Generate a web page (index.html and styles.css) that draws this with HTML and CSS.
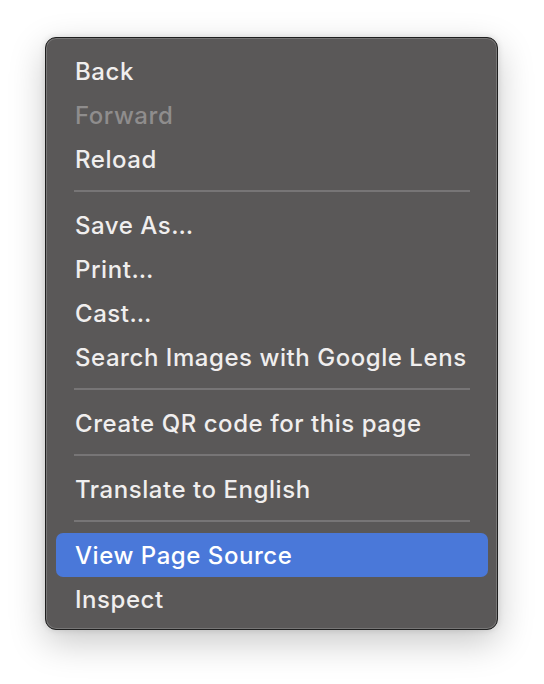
FILE: index.html
```html
<!DOCTYPE html>
<html lang="en">
<head>
<meta charset="utf-8">
<title>Context menu</title>
<link rel="stylesheet" href="styles.css">
</head>
<body>
<div class="menu" role="menu">
  <div class="item">Back</div>
  <div class="item disabled">Forward</div>
  <div class="item">Reload</div>
  <div class="sep"></div>
  <div class="item">Save As…</div>
  <div class="item">Print…</div>
  <div class="item">Cast…</div>
  <div class="item">Search Images with Google Lens</div>
  <div class="sep"></div>
  <div class="item">Create QR code for this page</div>
  <div class="sep"></div>
  <div class="item">Translate to English</div>
  <div class="sep"></div>
  <div class="item active">View Page Source</div>
  <div class="item">Inspect</div>
</div>
</body>
</html>
```
FILE: styles.css
```css
html, body {
  margin: 0;
  padding: 0;
  background: #ffffff;
}
body {
  width: 544px;
  height: 684px;
  font-family: Inter, "Noto Sans", "Liberation Sans", sans-serif;
  padding: 37px 0 0 45px;
  box-sizing: border-box;
}
.menu {
  width: 453px;
  box-sizing: border-box;
  background: #5a5858;
  border: 1px solid #1f1f1f;
  border-radius: 11px;
  box-shadow: inset 0 0 0 1px rgba(255,255,255,0.18), 0 12px 36px rgba(0,0,0,0.22), 0 0 6px rgba(0,0,0,0.12);
  padding: 11px 9px 8px 10px;
  display: flex;
  flex-direction: column;
}
.item {
  height: 44px;
  line-height: 46px;
  padding-left: 19px;
  font-size: 24px;
  font-weight: 500;
  letter-spacing: 0.55px;
  color: #f0eeee;
  border-radius: 7px;
  white-space: nowrap;
}
.item.disabled {
  color: #8f8d8d;
}
.item.active {
  background: #4a78d9;
  color: #ffffff;
}
.sep {
  height: 2px;
  margin: 9px 18px 11px 18px;
  background: #777576;
}
```
